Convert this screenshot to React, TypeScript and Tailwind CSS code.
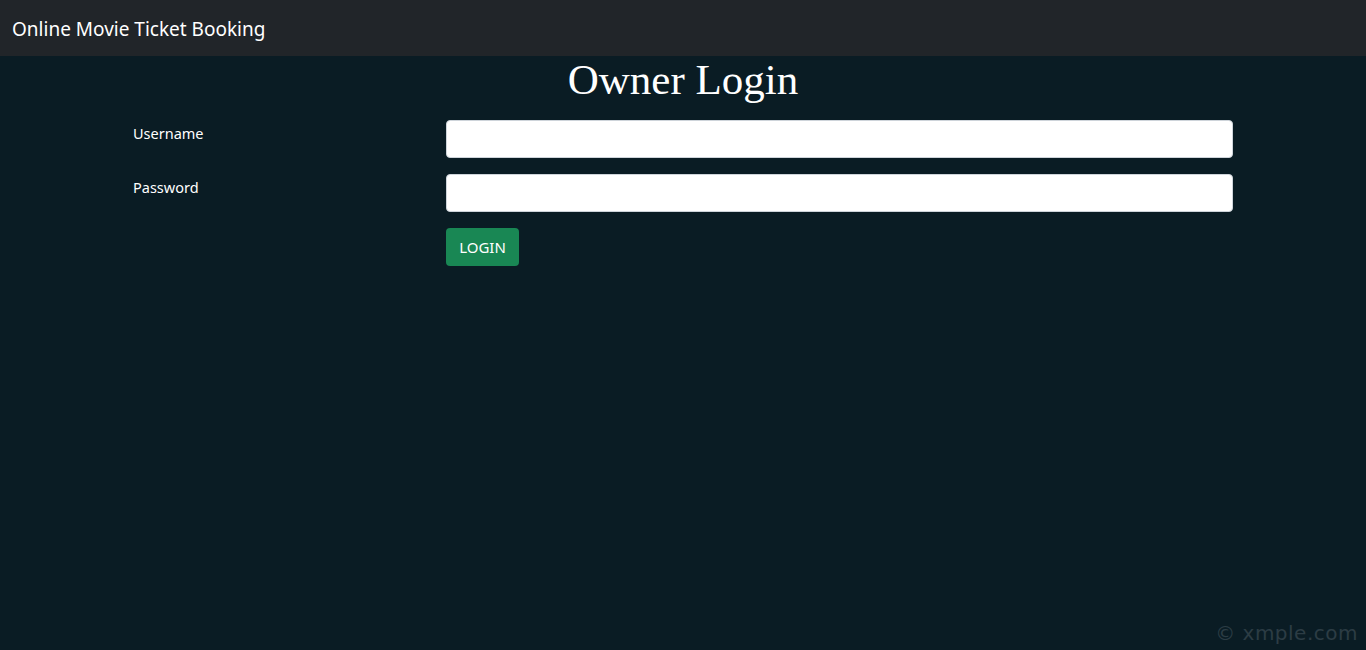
import React from "react";

export default function App() {
  return (
    <div className="relative min-h-[650px] w-full bg-[#0a1c24] text-white">
      <nav className="h-14 bg-[#212529] flex items-center px-3 pt-[2px]">
        <span className="text-[19px] text-white font-['Noto_Sans',sans-serif] leading-[30px]">
          Online Movie Ticket Booking
        </span>
      </nav>
      <div className="mx-auto w-[1100px]">
        <h1 className="text-center font-['Liberation_Serif',serif] text-[43px] leading-[50px] mt-[-1px] mb-[15px] text-white">
          Owner Login
        </h1>
        <form className="font-['Noto_Sans',sans-serif] text-[14.5px]">
          <div className="flex mb-4">
            <label className="w-[313px] pt-[1px] leading-[24px]">Username</label>
            <input
              type="text"
              className="flex-1 h-[38px] rounded-[4px] bg-white border border-[#ced4da] text-black px-3"
            />
          </div>
          <div className="flex mb-4">
            <label className="w-[313px] pt-[1px] leading-[24px]">Password</label>
            <input
              type="password"
              className="flex-1 h-[38px] rounded-[4px] bg-white border border-[#ced4da] text-black px-3"
            />
          </div>
          <div className="flex">
            <div className="w-[313px]" />
            <button
              type="button"
              className="h-[38px] w-[73px] rounded-[4px] bg-[#198754] text-white text-[15px]"
            >
              LOGIN
            </button>
          </div>
        </form>
      </div>
      <div className="absolute right-[8px] bottom-[2px] text-[20px] text-[#2c3c44] font-['DejaVu_Sans',sans-serif] tracking-wide">
        © xmple.com
      </div>
    </div>
  );
}
